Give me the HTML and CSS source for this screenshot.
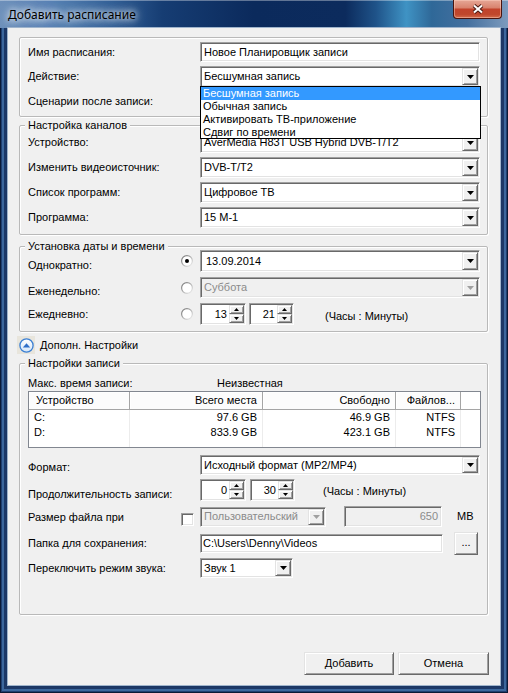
FILE: index.html
```html
<!DOCTYPE html>
<html lang="ru">
<head>
<meta charset="utf-8">
<title>Добавить расписание</title>
<link rel="stylesheet" href="styles.css">
</head>
<body>
<div class="window">
  <header class="titlebar">
    <span class="title">Добавить расписание</span>
    <span class="close-btn">
      <svg width="12" height="10" viewBox="0 0 12 10"><path d="M2 1.5 L10 8.5 M10 1.5 L2 8.5" stroke="#4a1a12" stroke-width="4"/><path d="M2 1.5 L10 8.5 M10 1.5 L2 8.5" stroke="#fff" stroke-width="2"/></svg>
    </span>
  </header>

  <main class="client">
    <section class="group group-main">
      <div class="row">
        <span class="label">Имя расписания:</span><span class="opt"></span>
        <div class="textbox sunken h20">Новое Планировщик записи</div>
      </div>
      <div class="row">
        <span class="label">Действие:</span><span class="opt"></span>
        <div class="combo sunken h21 is-open">
          <span class="value">Бесшумная запись</span>
          <span class="drop-btn raised"><svg width="7" height="4" viewBox="0 0 7 4"><path d="M0 0H7L3.5 4Z"/></svg></span>
          <ul class="droplist">
            <li class="selected">Бесшумная запись</li>
            <li>Обычная запись</li>
            <li>Активировать ТВ-приложение</li>
            <li>Сдвиг по времени</li>
          </ul>
        </div>
      </div>
      <div class="row">
        <span class="label">Сценарии после записи:</span><span class="opt"></span>
        <div class="combo sunken h21">
          <span class="value"></span>
          <span class="drop-btn raised"><svg width="7" height="4" viewBox="0 0 7 4"><path d="M0 0H7L3.5 4Z"/></svg></span>
        </div>
      </div>
    </section>

    <section class="group group-channels">
      <span class="legend">Настройка каналов</span>
      <div class="row">
        <span class="label">Устройство:</span><span class="opt"></span>
        <div class="combo sunken h21">
          <span class="value">AverMedia H83T USB Hybrid DVB-T/T2</span>
          <span class="drop-btn raised"><svg width="7" height="4" viewBox="0 0 7 4"><path d="M0 0H7L3.5 4Z"/></svg></span>
        </div>
      </div>
      <div class="row">
        <span class="label">Изменить видеоисточник:</span><span class="opt"></span>
        <div class="combo sunken h21">
          <span class="value">DVB-T/T2</span>
          <span class="drop-btn raised"><svg width="7" height="4" viewBox="0 0 7 4"><path d="M0 0H7L3.5 4Z"/></svg></span>
        </div>
      </div>
      <div class="row">
        <span class="label">Список программ:</span><span class="opt"></span>
        <div class="combo sunken h21">
          <span class="value">Цифровое ТВ</span>
          <span class="drop-btn raised"><svg width="7" height="4" viewBox="0 0 7 4"><path d="M0 0H7L3.5 4Z"/></svg></span>
        </div>
      </div>
      <div class="row">
        <span class="label">Программа:</span><span class="opt"></span>
        <div class="combo sunken h21">
          <span class="value">15 M-1</span>
          <span class="drop-btn raised"><svg width="7" height="4" viewBox="0 0 7 4"><path d="M0 0H7L3.5 4Z"/></svg></span>
        </div>
      </div>
    </section>

    <section class="group group-date">
      <span class="legend">Установка даты и времени</span>
      <div class="row row-once">
        <span class="label low-9">Однократно:</span>
        <span class="opt"><svg class="radio" width="12" height="12" viewBox="0 0 12 12"><defs><linearGradient id="rg1" x1="0" y1="0" x2="1" y2="1"><stop offset="0" stop-color="#6e6e6e"/><stop offset="1" stop-color="#f4f4f4"/></linearGradient></defs><circle cx="6" cy="6" r="5.4" fill="#fff" stroke="url(#rg1)" stroke-width="1.2"/><circle cx="6" cy="6" r="2" fill="#000"/></svg></span>
        <div class="combo sunken h22 date">
          <span class="value">13.09.2014</span>
          <span class="drop-btn raised"><svg width="7" height="4" viewBox="0 0 7 4"><path d="M0 0H7L3.5 4Z"/></svg></span>
        </div>
      </div>
      <div class="row row-weekly">
        <span class="label low-8">Еженедельно:</span>
        <span class="opt"><svg class="radio" width="12" height="12" viewBox="0 0 12 12"><defs><linearGradient id="rg2" x1="0" y1="0" x2="1" y2="1"><stop offset="0" stop-color="#6e6e6e"/><stop offset="1" stop-color="#f4f4f4"/></linearGradient></defs><circle cx="6" cy="6" r="5.4" fill="#fff" stroke="url(#rg2)" stroke-width="1.2"/></svg></span>
        <div class="combo sunken h21 disabled">
          <span class="value">Суббота</span>
          <span class="drop-btn raised"><svg width="7" height="4" viewBox="0 0 7 4"><path d="M0 0H7L3.5 4Z"/></svg></span>
        </div>
      </div>
      <div class="row row-daily">
        <span class="label">Ежедневно:</span>
        <span class="opt"><svg class="radio" width="12" height="12" viewBox="0 0 12 12"><defs><linearGradient id="rg3" x1="0" y1="0" x2="1" y2="1"><stop offset="0" stop-color="#6e6e6e"/><stop offset="1" stop-color="#f4f4f4"/></linearGradient></defs><circle cx="6" cy="6" r="5.4" fill="#fff" stroke="url(#rg3)" stroke-width="1.2"/></svg></span>
        <div class="field">
          <div class="spin sunken h22">
            <span class="num">13</span>
            <span class="spin-btns">
              <span class="spin-btn raised"><svg width="5" height="3" viewBox="0 0 5 3"><path d="M0 3H5L2.5 0Z"/></svg></span>
              <span class="spin-btn raised"><svg width="5" height="3" viewBox="0 0 5 3"><path d="M0 0H5L2.5 3Z"/></svg></span>
            </span>
          </div>
          <div class="spin sunken h22 spin-second">
            <span class="num">21</span>
            <span class="spin-btns">
              <span class="spin-btn raised"><svg width="5" height="3" viewBox="0 0 5 3"><path d="M0 3H5L2.5 0Z"/></svg></span>
              <span class="spin-btn raised"><svg width="5" height="3" viewBox="0 0 5 3"><path d="M0 0H5L2.5 3Z"/></svg></span>
            </span>
          </div>
          <span class="hint hint-daily">(Часы : Минуты)</span>
        </div>
      </div>
    </section>

    <div class="expander">
      <span class="exp-icon"><svg width="15" height="15" viewBox="0 0 15 15"><defs><linearGradient id="eg" x1="0" y1="0" x2="0" y2="1"><stop offset="0" stop-color="#ffffff"/><stop offset="1" stop-color="#d4e5f8"/></linearGradient></defs><circle cx="7.5" cy="7.5" r="6.6" fill="url(#eg)" stroke="#3b7fd3" stroke-width="1.3"/><path d="M3.8 9.6H11.2L7.5 5.2Z" fill="#2f6fc9"/></svg></span>
      <span>Дополн. Настройки</span>
    </div>

    <section class="group group-record">
      <span class="legend">Настройки записи</span>
      <div class="info-row">
        <span class="info-label">Макс. время записи:</span>
        <span>Неизвестная</span>
      </div>
      <div class="listview">
        <div class="lv-head">
          <span class="lv-left">Устройство</span>
          <span>Всего места</span>
          <span>Свободно</span>
          <span>Файлов...</span>
          <span></span>
        </div>
        <div class="lv-body">
          <span class="lv-left">C:</span><span>97.6 GB</span><span>46.9 GB</span><span>NTFS</span><span></span>
          <span class="lv-left">D:</span><span>833.9 GB</span><span>423.1 GB</span><span>NTFS</span><span></span>
          <span></span><span></span><span></span><span></span><span></span>
        </div>
      </div>
      <div class="row row-format">
        <span class="label low-6">Формат:</span><span class="opt"></span>
        <div class="combo sunken h20">
          <span class="value">Исходный формат (MP2/MP4)</span>
          <span class="drop-btn raised"><svg width="7" height="4" viewBox="0 0 7 4"><path d="M0 0H7L3.5 4Z"/></svg></span>
        </div>
      </div>
      <div class="row row-duration">
        <span class="label low-9">Продолжительность записи:</span><span class="opt"></span>
        <div class="field">
          <div class="spin sunken h22">
            <span class="num">0</span>
            <span class="spin-btns">
              <span class="spin-btn raised"><svg width="5" height="3" viewBox="0 0 5 3"><path d="M0 3H5L2.5 0Z"/></svg></span>
              <span class="spin-btn raised"><svg width="5" height="3" viewBox="0 0 5 3"><path d="M0 0H5L2.5 3Z"/></svg></span>
            </span>
          </div>
          <div class="spin sunken h22 spin-second wide-gap">
            <span class="num">30</span>
            <span class="spin-btns">
              <span class="spin-btn raised"><svg width="5" height="3" viewBox="0 0 5 3"><path d="M0 3H5L2.5 0Z"/></svg></span>
              <span class="spin-btn raised"><svg width="5" height="3" viewBox="0 0 5 3"><path d="M0 0H5L2.5 3Z"/></svg></span>
            </span>
          </div>
          <span class="hint hint-duration">(Часы : Минуты)</span>
        </div>
      </div>
      <div class="row row-size">
        <span class="label low-5">Размер файла при</span>
        <span class="opt opt-check"><span class="checkbox sunken"></span></span>
        <div class="field">
          <div class="combo sunken h20 disabled size-combo">
            <span class="value">Пользовательский</span>
            <span class="drop-btn raised"><svg width="7" height="4" viewBox="0 0 7 4"><path d="M0 0H7L3.5 4Z"/></svg></span>
          </div>
          <div class="textbox sunken h21 disabled size-box">650</div>
          <span class="unit">MB</span>
        </div>
      </div>
      <div class="row row-folder">
        <span class="label">Папка для сохранения:</span><span class="opt"></span>
        <div class="field">
          <div class="textbox sunken h19 folder-box">C:\Users\Denny\Videos</div>
          <span class="btn raised browse">...</span>
        </div>
      </div>
      <div class="row row-sound">
        <span class="label">Переключить режим звука:</span><span class="opt"></span>
        <div class="field">
          <div class="combo sunken h20 sound-combo">
            <span class="value">Звук 1</span>
            <span class="drop-btn raised"><svg width="7" height="4" viewBox="0 0 7 4"><path d="M0 0H7L3.5 4Z"/></svg></span>
          </div>
        </div>
      </div>
    </section>

    <footer class="buttons">
      <span class="btn raised btn-add">Добавить</span>
      <span class="btn raised btn-cancel">Отмена</span>
    </footer>
  </main>
</div>
</body>
</html>
```

FILE: styles.css
```css
* { box-sizing: border-box; }
html, body { margin: 0; padding: 0; }
body {
  font-family: "Liberation Sans", Arial, sans-serif;
  font-size: 11px;
  line-height: 13px;
  color: #000;
  background: #fff;
}

.window {
  width: 508px;
  height: 693px;
  display: flex;
  flex-direction: column;
  background: #1b3663;
  box-shadow: inset 0 0 0 1px #0b1a36, inset 0 0 0 2px #1f3f70, inset 0 0 0 4px #3c679c, inset 0 0 0 6px #1c3867;
}

.titlebar {
  height: 28px;
  flex: none;
  display: flex;
  justify-content: space-between;
  align-items: flex-start;
  background: linear-gradient(90deg, #6d90ba 0%, #5782b4 10%, #325f96 22%, #163d73 32%, #0b2a5c 50%, #0c2b5d 68%, #1f5389 74%, #3f93c4 80%, #2f6898 85%, #45709f 92%, #7d9bbd 100%);
  box-shadow: inset 0 1px 0 rgba(255,255,255,.35);
}
.title {
  margin: 7px 0 0 8px;
  font-family: "Noto Sans", "Open Sans", sans-serif;
  font-size: 12px;
  line-height: 16px;
  color: #000;
  text-shadow: 0 0 6px #fff, 0 0 10px rgba(255,255,255,.85), 0 0 14px rgba(220,235,250,.7);
}
.close-btn {
  width: 49px;
  height: 19px;
  margin-right: 6px;
  display: flex;
  align-items: center;
  justify-content: center;
  border: 1px solid #4a140e;
  border-top: none;
  border-radius: 0 0 4px 4px;
  background: linear-gradient(#e6a796 0%, #d9846f 42%, #c2432b 52%, #c0472c 80%, #d46c4b 100%);
  box-shadow: inset 0 0 0 1px rgba(255,215,200,.45);
}

.client {
  flex: 1;
  margin: 0 8px 8px;
  background: #f0f0f0;
  padding: 9px 12px 10px 11px;
  display: flex;
  flex-direction: column;
  box-shadow: 0 0 0 1px #9fb4cc;
}

/* group boxes */
.group {
  border: 1px solid #b9b9b9;
  border-radius: 2px;
  box-shadow: inset 1px 1px 0 #fff, 1px 1px 0 #fff;
  padding: 0 7px 6px 8px;
  display: flex;
  flex-direction: column;
}
.legend {
  align-self: flex-start;
  margin: -7px 0 0 -3px;
  padding: 0 3px;
  background: #f0f0f0;
  line-height: 13px;
}

.group-main { padding-top: 4px; padding-bottom: 4px; }
.group-main .row + .row { margin-top: 4px; }

.group-channels { margin-top: 8px; }
.group-channels .row + .row { margin-top: 4px; }

.group-date { margin-top: 11px; }
.row-once { margin-top: -3px; }
.row-weekly, .row-daily { margin-top: 5px; }

.group-record { margin-top: 9px; padding-bottom: 36px; }
.info-row { margin-top: 6px; height: 14px; display: flex; align-items: center; }
.info-label { width: 189px; }
.row-format { margin-top: 7px; }
.row-duration { margin-top: 4px; }
.row-size { margin-top: 5px; }
.row-folder { margin-top: 5px; }
.row-sound { margin-top: 3px; }

/* rows */
.row {
  display: grid;
  grid-template-columns: 152px 20px 280px;
  align-items: center;
}
.label { white-space: nowrap; }
.low-5 { align-self: start; padding-top: 5px; }
.low-6 { align-self: start; padding-top: 6px; }
.low-8 { align-self: start; padding-top: 8px; }
.low-9 { align-self: start; padding-top: 9px; }
.opt { display: flex; align-items: center; height: 100%; }
.radio { display: block; margin-left: 1px; }
.field { display: flex; align-items: center; }

.h19 { height: 19px; }
.h20 { height: 20px; }
.h21 { height: 21px; }
.h22 { height: 22px; }

/* 3D borders */
.sunken {
  background: #fff;
  border: 1px solid;
  border-color: #a0a0a0 #fff #fff #a0a0a0;
  box-shadow: inset 1px 1px 0 #696969, inset -1px -1px 0 #e3e3e3;
}
.raised {
  background: #f0f0f0;
  border: 1px solid;
  border-color: #e3e3e3 #696969 #696969 #e3e3e3;
  box-shadow: inset 1px 1px 0 #fff, inset -1px -1px 0 #a0a0a0;
}

.textbox {
  display: flex;
  align-items: center;
  padding: 0 3px;
  white-space: nowrap;
  overflow: hidden;
}
.textbox.disabled { background: #f0f0f0; color: #8b8b8b; justify-content: flex-end; }

.combo {
  position: relative;
  display: flex;
  align-items: stretch;
  padding: 1px;
}
.combo .value {
  flex: 1;
  display: flex;
  align-items: center;
  padding-left: 2px;
  white-space: nowrap;
  overflow: hidden;
}
.combo.date .value { padding-left: 4px; }
.drop-btn {
  width: 16px;
  display: flex;
  align-items: center;
  justify-content: center;
  color: #000;
}
.drop-btn svg { display: block; fill: currentColor; }
.combo.disabled { background: #f0f0f0; color: #8b8b8b; }
.combo.disabled .drop-btn { color: #a0a0a0; }

.is-open { z-index: 5; }
.droplist {
  position: absolute;
  left: -1px;
  top: 100%;
  width: 281px;
  margin: 0;
  padding: 0;
  list-style: none;
  background: #fff;
  border: 1px solid #000;
  color: #000;
}
.droplist li {
  height: 13px;
  line-height: 13px;
  padding-left: 2px;
  white-space: nowrap;
}
.droplist li:last-child { height: 12px; }
.droplist li.selected { background: #3399ff; color: #fff; }

/* spin boxes */
.spin {
  width: 46px;
  display: flex;
  align-items: stretch;
  padding: 1px;
}
.spin .num {
  flex: 1;
  display: flex;
  align-items: center;
  justify-content: flex-end;
  padding-right: 2px;
}
.spin-btns {
  width: 15px;
  display: flex;
  flex-direction: column;
}
.spin-btn {
  flex: 1;
  display: flex;
  align-items: center;
  justify-content: center;
}
.spin-btn svg { display: block; fill: #000; }
.spin-second { margin-left: 3px; width: 45px; }
.spin-second.wide-gap { margin-left: 4px; }
.hint-daily { margin-left: 31px; padding-top: 4px; }
.hint-duration { margin-left: 28px; padding-top: 3px; }

/* checkbox & size row */
.opt-check { align-items: flex-end; padding-bottom: 1px; }
.checkbox { display: block; width: 13px; height: 13px; margin-left: 1px; }
.size-combo { width: 126px; }
.size-box { width: 98px; margin-left: 18px; padding-right: 3px; }
.unit { margin-left: 15px; }

.folder-box { width: 243px; padding-left: 2px; }
.browse {
  width: 24px;
  height: 21px;
  margin-left: 11px;
  display: flex;
  align-items: center;
  justify-content: center;
  padding-bottom: 3px;
}
.sound-combo { width: 93px; }

/* expander */
.expander {
  margin-top: 4px;
  height: 18px;
  display: flex;
  align-items: center;
}
.exp-icon {
  width: 18px;
  height: 18px;
  margin-left: -2px;
  margin-right: 5px;
  background: #e8e5dc;
  display: flex;
  align-items: center;
  justify-content: center;
}
.exp-icon svg { display: block; }

/* list view */
.listview {
  margin-top: 1px;
  width: 453px;
  height: 57px;
  border: 1px solid #828790;
  background: #fff;
  display: flex;
  flex-direction: column;
}
.lv-head, .lv-body {
  display: grid;
  grid-template-columns: 101px 133px 133px 65px 19px;
}
.lv-head { height: 18px; flex: none; }
.lv-head span {
  display: flex;
  align-items: center;
  justify-content: flex-end;
  padding: 0 5px 0 6px;
  background: #fcfcfc;
  border-right: 1px solid #a5a5a5;
  border-bottom: 1px solid #a5a5a5;
  box-shadow: inset 1px 1px 0 #fff;
  white-space: nowrap;
}
.lv-head span:last-child { border-right: none; background: #fff; }
.lv-head .lv-left { justify-content: flex-start; padding-left: 7px; }
.lv-body {
  flex: 1;
  grid-template-rows: 15px 15px 1fr;
}
.lv-body span {
  display: flex;
  align-items: center;
  justify-content: flex-end;
  padding: 0 5px 0 5px;
  border-right: 1px solid #ececec;
  white-space: nowrap;
}
.lv-body span:nth-child(5n) { border-right: none; }
.lv-body .lv-left { justify-content: flex-start; }

/* buttons */
.buttons {
  margin-top: auto;
  margin-right: -1px;
  display: flex;
  justify-content: flex-end;
  gap: 4px;
}
.btn {
  height: 23px;
  display: flex;
  align-items: center;
  justify-content: center;
}
.btn-add { width: 90px; }
.btn-cancel { width: 91px; }
```
